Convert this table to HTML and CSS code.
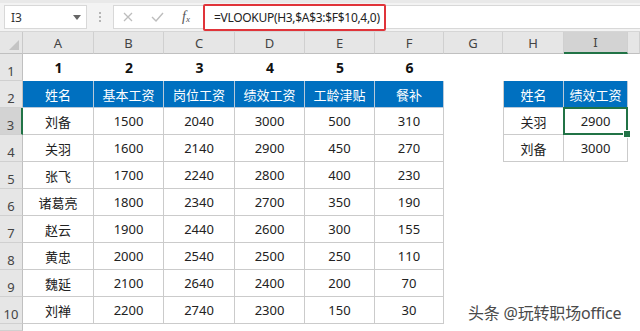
FILE: index.html
```html
<!DOCTYPE html>
<html lang="zh">
<head>
<meta charset="utf-8">
<title>VLOOKUP</title>
<link rel="stylesheet" href="styles.css">
</head>
<body>
<div class="app">
  <div class="fbar">
    <div class="namebox"><span>I3</span>
      <svg class="dd" width="8" height="5" viewBox="0 0 8 5"><path d="M0 0h8L4 5z" fill="#666"/></svg>
    </div>
    <div class="dots"><i></i><i></i><i></i></div>
    <div class="finput">
      <svg class="ic x" width="10" height="10" viewBox="0 0 10 10"><path d="M1 1l8 8M9 1l-8 8" stroke="#bdbdbd" stroke-width="1.3" fill="none"/></svg>
      <svg class="ic ok" width="13" height="10" viewBox="0 0 13 10"><path d="M1 5l4 4 7-8" stroke="#bdbdbd" stroke-width="1.4" fill="none"/></svg>
      <span class="fx">f<sub>x</sub></span>
      <div class="formula">=VLOOKUP(H3,$A$3:$F$10,4,0)</div>
    </div>
  </div>
  <div class="sheet">
    <div class="corner"><svg width="10" height="10" viewBox="0 0 10 10"><path d="M10 0v10H0z" fill="#c4c4c4"/></svg></div>
    <div class="ch">A</div><div class="ch">B</div><div class="ch">C</div><div class="ch">D</div><div class="ch">E</div><div class="ch">F</div><div class="ch">G</div><div class="ch">H</div><div class="ch sel">I</div><div class="ch"></div>

    <div class="rh">1</div>
    <div class="c n">1</div><div class="c n">2</div><div class="c n">3</div><div class="c n">4</div><div class="c n">5</div><div class="c n">6</div><div class="c"></div><div class="c"></div><div class="c"></div><div class="c"></div>

    <div class="rh">2</div>
    <div class="c th">姓名</div><div class="c th">基本工资</div><div class="c th">岗位工资</div><div class="c th">绩效工资</div><div class="c th">工龄津贴</div><div class="c th">餐补</div><div class="c"></div><div class="c th first">姓名</div><div class="c th">绩效工资</div><div class="c"></div>

    <div class="rh sel">3</div>
    <div class="c td">刘备</div><div class="c td">1500</div><div class="c td">2040</div><div class="c td">3000</div><div class="c td">500</div><div class="c td">310</div><div class="c"></div><div class="c td first">关羽</div><div class="c td act">2900</div><div class="c"></div>

    <div class="rh">4</div>
    <div class="c td">关羽</div><div class="c td">1600</div><div class="c td">2140</div><div class="c td">2900</div><div class="c td">450</div><div class="c td">270</div><div class="c"></div><div class="c td first">刘备</div><div class="c td">3000</div><div class="c"></div>

    <div class="rh">5</div>
    <div class="c td">张飞</div><div class="c td">1700</div><div class="c td">2240</div><div class="c td">2800</div><div class="c td">400</div><div class="c td">230</div><div class="c"></div><div class="c"></div><div class="c"></div><div class="c"></div>

    <div class="rh">6</div>
    <div class="c td">诸葛亮</div><div class="c td">1800</div><div class="c td">2340</div><div class="c td">2700</div><div class="c td">350</div><div class="c td">190</div><div class="c"></div><div class="c"></div><div class="c"></div><div class="c"></div>

    <div class="rh">7</div>
    <div class="c td">赵云</div><div class="c td">1900</div><div class="c td">2440</div><div class="c td">2600</div><div class="c td">300</div><div class="c td">155</div><div class="c"></div><div class="c"></div><div class="c"></div><div class="c"></div>

    <div class="rh">8</div>
    <div class="c td">黄忠</div><div class="c td">2000</div><div class="c td">2540</div><div class="c td">2500</div><div class="c td">250</div><div class="c td">110</div><div class="c"></div><div class="c"></div><div class="c"></div><div class="c"></div>

    <div class="rh">9</div>
    <div class="c td">魏延</div><div class="c td">2100</div><div class="c td">2640</div><div class="c td">2400</div><div class="c td">200</div><div class="c td">70</div><div class="c"></div><div class="c"></div><div class="c"></div><div class="c"></div>

    <div class="rh">10</div>
    <div class="c td">刘禅</div><div class="c td">2200</div><div class="c td">2740</div><div class="c td">2300</div><div class="c td">150</div><div class="c td">30</div><div class="c"></div><div class="c"></div><div class="c"></div><div class="c"></div>

    <div class="rh"></div>
    <div class="c"></div><div class="c"></div><div class="c"></div><div class="c"></div><div class="c"></div><div class="c"></div><div class="c"></div><div class="c"></div><div class="c"></div><div class="c"></div>
  </div>
  <div class="watermark">头条 @玩转职场office</div>
</div>
</body>
</html>
```
FILE: styles.css
```css
* { box-sizing: border-box; }
html, body { margin: 0; padding: 0; }
body {
  width: 640px;
  height: 331px;
  overflow: hidden;
  background: #fff;
  font-family: "Noto Sans", "Noto Sans CJK SC", sans-serif;
}
.app { position: relative; width: 640px; height: 331px; overflow: hidden; }

.fbar {
  height: 32px;
  background: #f3f3f3;
  border-top: 3px solid #e9e9e9;
  border-bottom: 1px solid #d6d6d6;
  display: flex;
  align-items: center;
}
.namebox {
  margin-left: 4px;
  width: 83px;
  height: 24px;
  background: #fff;
  border: 1px solid #d8d8d8;
  display: flex;
  align-items: center;
  justify-content: space-between;
  padding: 0 5px 0 6px;
  font-size: 12px;
  color: #333;
}
.dots {
  width: 26px;
  display: flex;
  flex-direction: column;
  align-items: center;
  gap: 2px;
}
.dots i { width: 2px; height: 2px; background: #b5b5b5; display: block; }
.finput {
  flex: 1;
  height: 24px;
  background: #fff;
  border: 1px solid #d8d8d8;
  border-right: none;
  display: flex;
  align-items: center;
  padding-left: 9px;
}
.ic { display: block; }
.x { margin-right: 18px; }
.ok { margin-right: 18px; }
.fx {
  font-family: "Liberation Serif", serif;
  font-style: italic;
  font-size: 14px;
  color: #555;
  line-height: 1;
  width: 18px;
}
.fx sub { font-size: 9px; vertical-align: -1px; }
.formula {
  margin-left: 3px;
  height: 27px;
  border: 2px solid #e0343a;
  border-radius: 2px;
  display: flex;
  align-items: center;
  padding: 0 4px 0 9px;
  font-size: 12px;
  letter-spacing: -0.3px;
  color: #222;
  white-space: nowrap;
  background: #fff;
}

.sheet {
  display: grid;
  grid-template-columns: 23px 71px 70px 71px 70px 70px 69px 59px 61px 64px 1fr;
  grid-template-rows: 22px repeat(10, 27px) 1fr;
  height: 299px;
}
.corner {
  background: #e6e6e6;
  border-right: 1px solid #c9c9c9;
  border-bottom: 1px solid #c0c0c0;
  display: flex;
  align-items: flex-end;
  justify-content: flex-end;
  padding: 0 3px 3px 0;
}
.ch {
  background: #e6e6e6;
  border-right: 1px solid #d0d0d0;
  border-bottom: 1px solid #c0c0c0;
  display: flex;
  align-items: center;
  justify-content: center;
  font-size: 13px;
  color: #444;
}
.ch.sel {
  background: #d3d3d3;
  border-bottom: 2px solid #217346;
}
.rh {
  background: #e6e6e6;
  border-right: 1px solid #c0c0c0;
  border-bottom: 1px solid #d0d0d0;
  display: flex;
  align-items: flex-end;
  justify-content: center;
  padding-bottom: 1px;
  font-size: 13px;
  line-height: 16px;
  color: #444;
}
.rh.sel {
  background: #d3d3d3;
  border-right: 2px solid #217346;
}
.c {
  display: flex;
  align-items: center;
  justify-content: center;
  font-size: 13px;
  color: #222;
  background: #fff;
}
.n { font-weight: 700; font-size: 14px; color: #111; }
.th {
  background: #0070c0;
  color: #fff;
  border-right: 1px solid #b9c9d9;
  border-bottom: 1px solid #b9c9d9;
}
.td {
  border-right: 1px solid #cbcbcb;
  border-bottom: 1px solid #cbcbcb;
}
.first { border-left: 1px solid #cbcbcb; }
.act { position: relative; }
.act::after {
  content: "";
  position: absolute;
  left: -1px; top: -1px; right: -1px; bottom: -1px;
  border: 2px solid #217346;
}
.act::before {
  content: "";
  position: absolute;
  right: -4px; bottom: -4px;
  width: 6px; height: 6px;
  background: #217346;
  border: 1px solid #fff;
  z-index: 1;
}
.watermark {
  position: absolute;
  left: 468px;
  top: 300px;
  font-size: 16px;
  color: #4a4a4a;
  white-space: nowrap;
  letter-spacing: -0.2px;
}
```
